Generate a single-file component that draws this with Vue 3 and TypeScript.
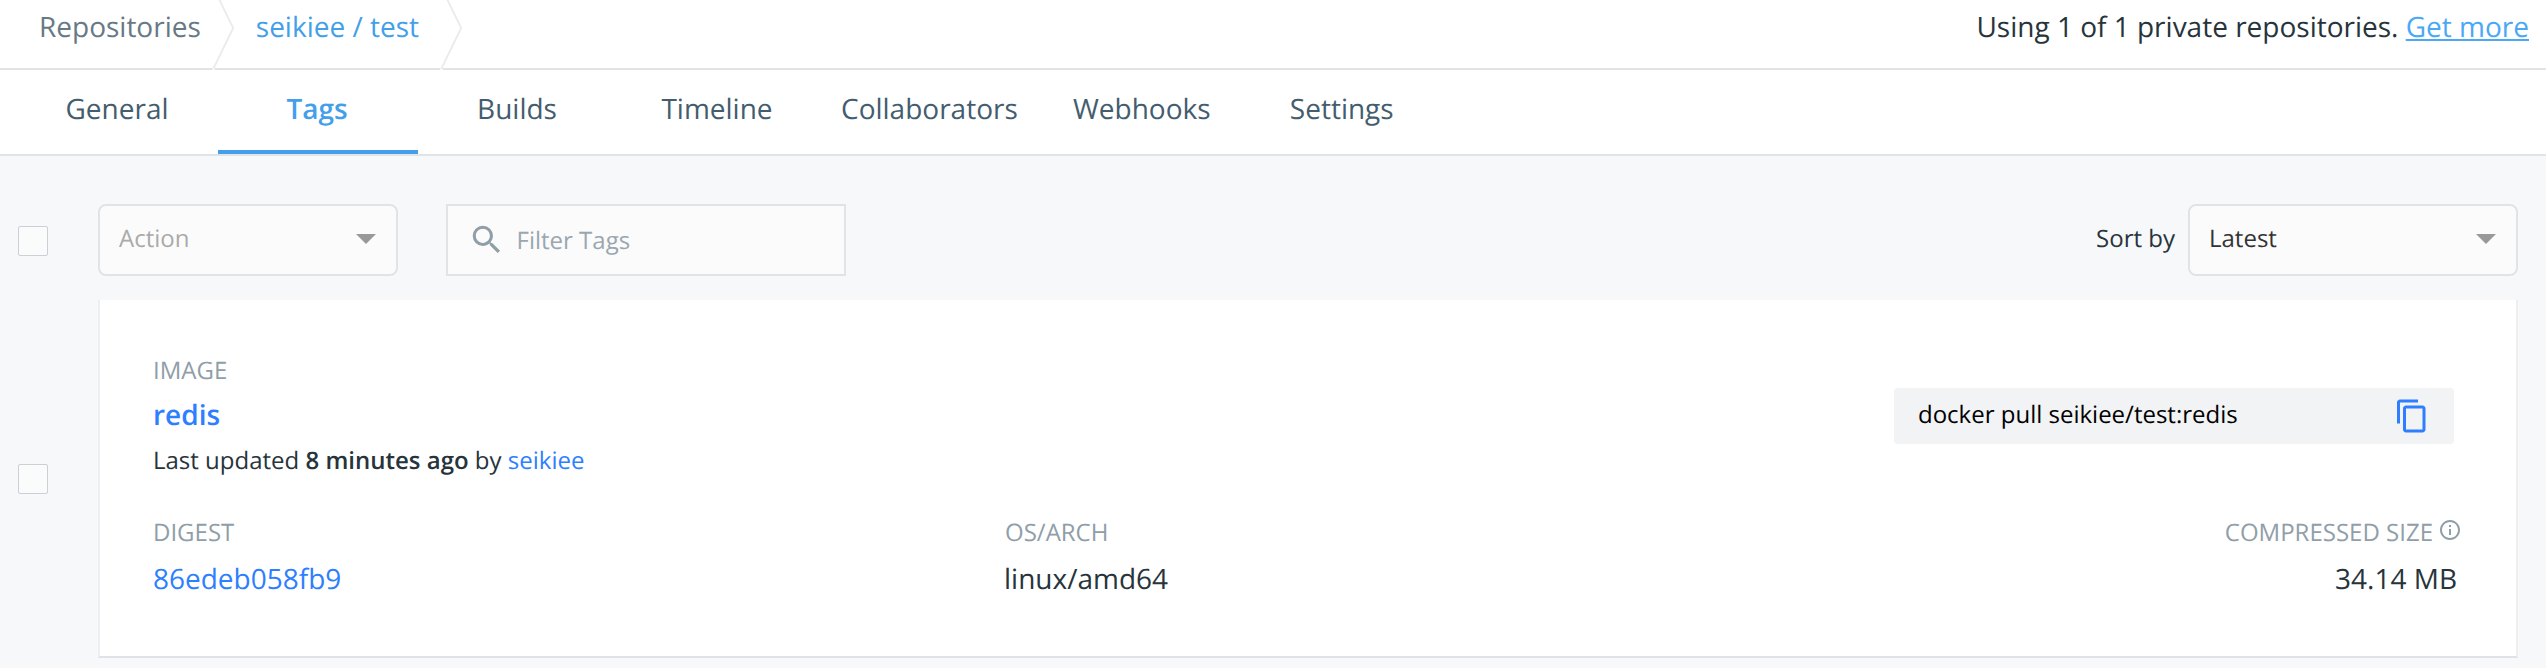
<script setup lang="ts">
import { ref } from 'vue'

const tabs: string[] = ['General', 'Tags', 'Builds', 'Timeline', 'Collaborators', 'Webhooks', 'Settings']
const activeTab = ref<string>('Tags')
const crumbs: { label: string; current: boolean }[] = [
  { label: 'Repositories', current: false },
  { label: 'seikiee / test', current: true },
]
</script>

<template>
  <div class="page">
    <header class="topbar">
      <nav class="crumbs">
        <div v-for="c in crumbs" :key="c.label" class="crumb" :class="{ current: c.current }">
          <span class="crumb-text">{{ c.label }}</span>
          <svg class="chevron" width="24" height="70" viewBox="0 0 24 70">
            <path d="M1.5 70v-2" stroke="#fff" stroke-width="2.4" />
            <path d="M7 -1L21.2 28L1.2 69" fill="none" stroke="#e9ebec" stroke-width="1.8" />
          </svg>
        </div>
      </nav>
      <div class="usage">Using 1 of 1 private repositories. <a class="more">Get more</a></div>
    </header>

    <nav class="tabs">
      <a
        v-for="t in tabs"
        :key="t"
        class="tab"
        :class="{ active: t === activeTab }"
        @click="activeTab = t"
      ><span>{{ t }}</span></a>
    </nav>

    <main class="content">
      <div class="toolbar">
        <span class="check"></span>
        <div class="select action"><span>Action</span><i class="caret"></i></div>
        <div class="filter">
          <svg class="search" width="37.5" height="37.5" viewBox="0 0 24 24">
            <path
              fill="#8f9ea8"
              d="M15.5 14h-.79l-.28-.27A6.471 6.471 0 0 0 16 9.5 6.5 6.5 0 1 0 9.5 16c1.61 0 3.09-.59 4.23-1.57l.27.28v.79l5 4.99L20.49 19l-4.99-5zm-6 0C7.01 14 5 11.99 5 9.5S7.01 5 9.5 5 14 7.01 14 9.5 11.99 14 9.5 14z"
            />
          </svg>
          <span>Filter Tags</span>
        </div>
        <span class="sort-label">Sort by</span>
        <div class="select sort"><span>Latest</span><i class="caret"></i></div>
      </div>

      <div class="row">
        <span class="check"></span>
        <section class="card">
          <div class="card-top">
            <div>
              <div class="label">IMAGE</div>
              <a class="name">redis</a>
              <div class="updated">Last updated <strong>8 minutes ago</strong> by <a>seikiee</a></div>
            </div>
            <div class="pull">
              <span>docker pull seikiee/test:redis</span>
              <svg width="36" height="36" viewBox="0 0 24 24">
                <path
                  fill="#2e7fff"
                  d="M16 1H4c-1.1 0-2 .9-2 2v14h2V3h12V1zm3 4H8c-1.1 0-2 .9-2 2v14c0 1.1.9 2 2 2h11c1.1 0 2-.9 2-2V7c0-1.1-.9-2-2-2zm0 16H8V7h11v14z"
                />
              </svg>
            </div>
          </div>
          <div class="card-bottom">
            <div>
              <div class="label">DIGEST</div>
              <a class="value link">86edeb058fb9</a>
            </div>
            <div>
              <div class="label os-label">OS/ARCH</div>
              <div class="value">linux/amd64</div>
            </div>
            <div class="size">
              <div class="label size-label">
                <span>COMPRESSED SIZE</span>
                <svg width="24" height="24" viewBox="0 0 24 24">
                  <path
                    fill="#8f9ea8"
                    d="M11 7h2v2h-2zm0 4h2v6h-2zm1-9C6.48 2 2 6.48 2 12s4.48 10 10 10 10-4.48 10-10S17.52 2 12 2zm0 18c-4.41 0-8-3.59-8-8s3.59-8 8-8 8 3.59 8 8-3.59 8-8 8z"
                  />
                </svg>
              </div>
              <div class="value size-value">34.14 MB</div>
            </div>
          </div>
        </section>
      </div>
    </main>
  </div>
</template>

<style>
html,
body {
  margin: 0;
  background: #f7f8fa;
}
</style>

<style scoped>
.page {
  width: 2546px;
  height: 668px;
  overflow: hidden;
  background: #f7f8fa;
  color: #27343b;
  font-family: 'Open Sans', 'Noto Sans', sans-serif;
  font-size: 24px;
  text-rendering: geometricPrecision;
  -webkit-font-smoothing: antialiased;
}
.page * {
  box-sizing: border-box;
}
.topbar {
  display: flex;
  justify-content: space-between;
  height: 70px;
  background: #fff;
  border-bottom: 2px solid #e0e4e7;
  font-size: 28px;
  line-height: 54px;
}
.crumbs {
  display: flex;
  padding-left: 39px;
}
.crumb {
  display: flex;
  color: #677985;
  white-space: nowrap;
}
.crumb.current {
  color: #439fe9;
  padding-left: 20px;
}
.chevron {
  display: block;
  flex: none;
  margin-left: 11px;
  margin-bottom: -2px;
}
.crumb.current .chevron {
  margin-left: 21px;
}
.usage {
  padding-right: 17px;
  white-space: nowrap;
}
.more {
  color: #4ba8f6;
  text-decoration: underline;
  text-decoration-thickness: 2px;
  text-underline-offset: 2px;
}
.tabs {
  display: flex;
  height: 86px;
  padding-left: 18px;
  background: #fff;
  border-bottom: 2px solid #e0e4e7;
}
.tab {
  min-width: 200px;
  height: 84px;
  padding: 0 25px 0 23px;
  text-align: center;
  font-size: 28px;
  line-height: 78px;
  color: #445d6e;
  cursor: pointer;
}
.tab.active {
  color: #439fe9;
  font-weight: 600;
  border-bottom: 4px solid #439fe9;
}
.content {
  padding: 48px 28px 0 18px;
}
.toolbar {
  display: flex;
  align-items: center;
  height: 72px;
}
.check {
  flex: none;
  width: 30px;
  height: 30px;
  margin-right: 50px;
  border: 1px solid #cbd0d6;
  border-radius: 2px;
  background: #fafbfb;
}
.toolbar .check {
  margin-top: 2px;
}
.select {
  display: flex;
  justify-content: space-between;
  height: 72px;
  border: 2px solid #e0e4e7;
  border-radius: 8px;
  background: #fbfbfb;
  line-height: 66px;
  padding: 0 20px 0 19px;
}
.action {
  width: 300px;
  color: #aaa;
}
.sort {
  width: 330px;
  color: #333;
}
.caret {
  width: 0;
  height: 0;
  margin-top: 28px;
  border: 10px solid transparent;
  border-top-color: #999;
  border-bottom-width: 0;
}
.filter {
  display: flex;
  width: 400px;
  height: 72px;
  margin-left: 48px;
  padding-left: 20px;
  border: 2px solid #e0e4e7;
  background: #fbfbfb;
  line-height: 69px;
  color: #9aa7b0;
}
.search {
  margin: 15px 11px 0 0;
}
.sort-label {
  margin-left: auto;
  margin-right: 13px;
  line-height: 66px;
  margin-top: -2px;
}
.row {
  display: flex;
  align-items: center;
  margin-top: 24px;
}
.card {
  flex: 1;
  height: 358px;
  padding: 53px 54px 0 53px;
  background: #fff;
  border: 2px solid #edeff1;
  border-top: 0;
  border-bottom-color: #dfe3e7;
}
.label {
  line-height: 36px;
  color: #8f9ea8;
}
.card-top {
  display: flex;
  justify-content: space-between;
  height: 162px;
}
.name {
  display: block;
  font-size: 28px;
  line-height: 52px;
  font-weight: 600;
  color: #2e7fff;
}
.updated {
  line-height: 39px;
}
.updated strong {
  font-weight: 600;
}
.updated a,
.link {
  color: #2e7fff;
}
.pull {
  display: flex;
  align-items: center;
  justify-content: space-between;
  width: 560px;
  height: 56px;
  margin: 35px 8px 0 0;
  padding: 0 24px;
  border-radius: 4px;
  background: #f2f3f5;
  color: #000;
  line-height: 54px;
}
.pull span {
  margin-bottom: 2px;
}
.card-bottom {
  display: grid;
  grid-template-columns: 851px 852px 1fr;
}
.value {
  display: block;
  font-size: 28px;
  line-height: 56px;
}
.os-label {
  padding-left: 1px;
}
.size {
  text-align: right;
}
.size-label {
  display: flex;
  justify-content: flex-end;
}
.size-label svg {
  margin: 3px 0 0 5px;
}
.size-value {
  padding-right: 5px;
}
</style>
